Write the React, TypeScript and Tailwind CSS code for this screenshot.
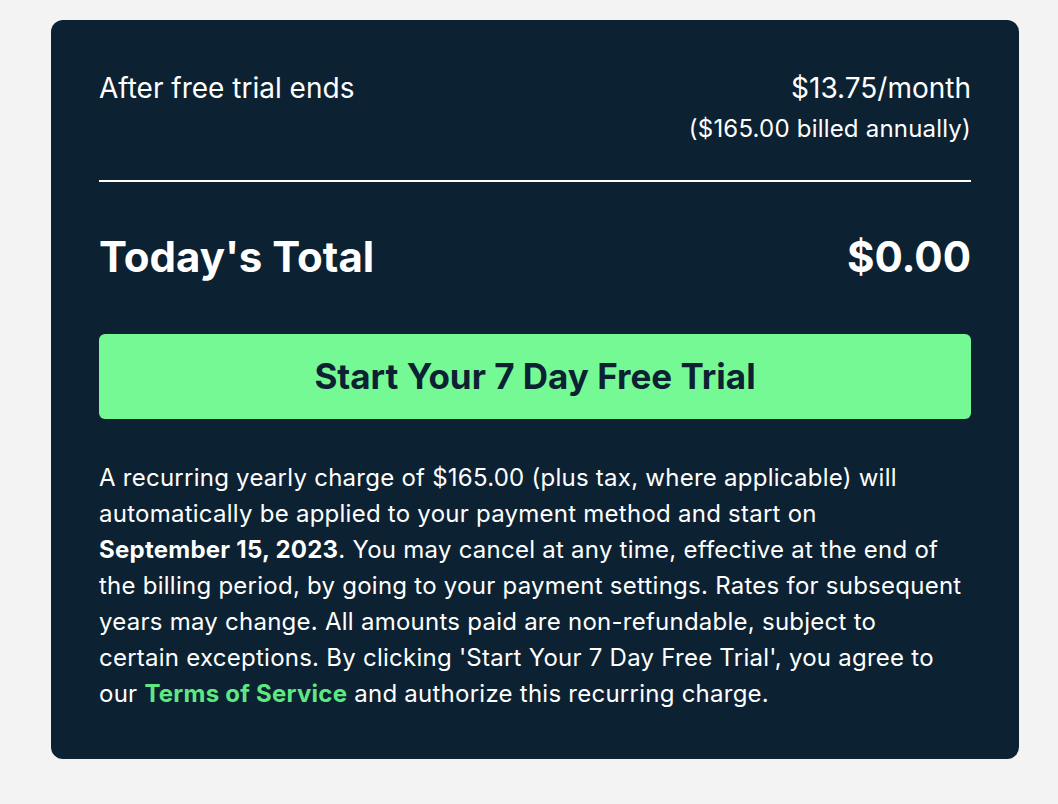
import React from 'react';

const font = { fontFamily: 'Inter, "Noto Sans", sans-serif' };

const TrialSummary: React.FC = () => {
  return (
    <div className="min-h-[804px] bg-[#f3f3f3] pt-5" style={font}>
      <div className="ml-[51px] w-[968px] rounded-xl bg-[#0c2233] px-12 pt-[52px] pb-[47px] text-white">
        {/* after trial */}
        <div className="flex items-start justify-between">
          <span className="text-[28px] leading-8">After free trial ends</span>
          <div className="text-right">
            <div className="text-[28px] leading-8">$13.75/month</div>
            <div className="mt-[11px] text-[24px] leading-7 tracking-[0.2px]">($165.00 billed annually)</div>
          </div>
        </div>

        <div className="mt-[37px] h-[2px] bg-white" />

        {/* total */}
        <div className="mt-[50px] flex items-center justify-between text-[42px] font-bold leading-[50px]">
          <span>Today's Total</span>
          <span>$0.00</span>
        </div>

        <button className="mt-[52px] flex h-[85px] w-full items-center justify-center rounded-md bg-[#75f994] text-[35px] font-bold text-[#0c2233]">
          Start Your 7 Day Free Trial
        </button>

        <p className="mt-[41px] whitespace-nowrap text-[24px] leading-9 tracking-[0.25px]">
          A recurring yearly charge of $165.00 (plus tax, where applicable) will
          <br />
          automatically be applied to your payment method and start on
          <br />
          <strong className="font-bold">September 15, 2023</strong>. You may cancel at any time, effective at the end of
          <br />
          the billing period, by going to your payment settings. Rates for subsequent
          <br />
          years may change. All amounts paid are non-refundable, subject to
          <br />
          certain exceptions. By clicking 'Start Your 7 Day Free Trial', you agree to
          <br />
          our{' '}
          <a href="#" className="font-bold text-[#5ee882]">
            Terms of Service
          </a>{' '}
          and authorize this recurring charge.
        </p>
      </div>
    </div>
  );
};

export default function App() {
  return <TrialSummary />;
}
